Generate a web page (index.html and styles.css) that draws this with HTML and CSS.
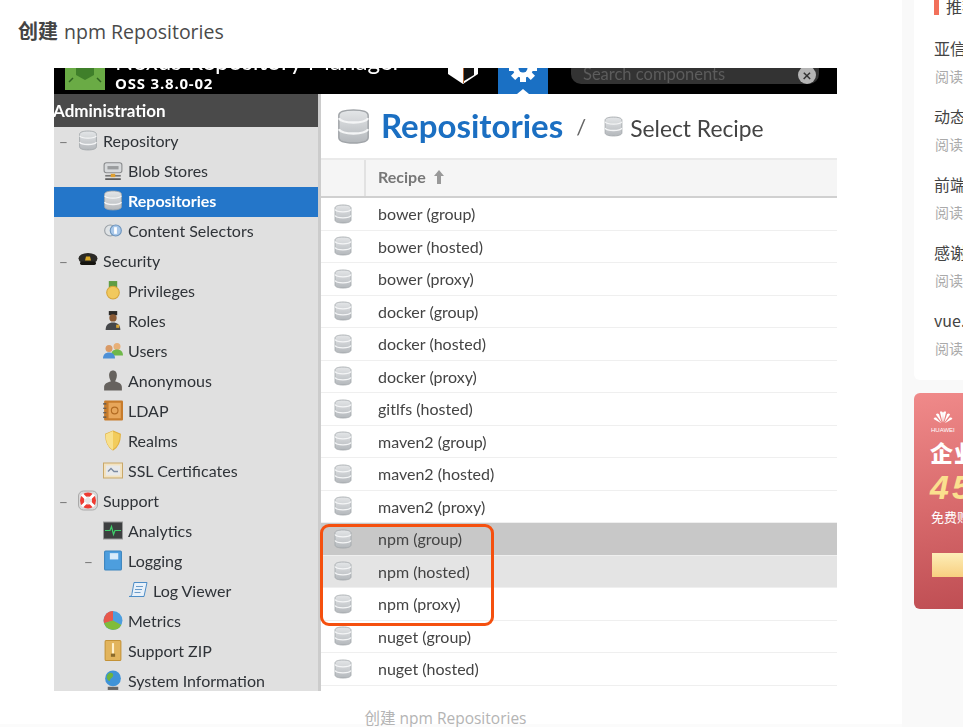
FILE: index.html
```html
<!DOCTYPE html>
<html>
<head>
    <meta charset="utf-8">
    <link rel="stylesheet" href="styles.css">
    <title>创建 npm Repositories</title>
</head>
<body>
    <svg class="defs" width="0" height="0">
        <defs>
            <linearGradient id="dbFill" x1="0" y1="0" x2="0" y2="1">
                <stop offset="0" stop-color="#e4e6e8"/>
                <stop offset="1" stop-color="#b4b8bc"/>
            </linearGradient>
            <symbol id="db" viewBox="0 0 18 20">
                <path d="M1 4c0-2 3.500-3 8-3s8 1 8 3v12c0 2-3.500 3-8 3s-8-1-8-3z" fill="url(#dbFill)" stroke="#a0a4a8" stroke-width=".8"/>
                <path d="M1 5.500c1 1.700 4 2.300 8 2.300s7-.6 8-2.300M1 11.500c1 1.700 4 2.300 8 2.300s7-.6 8-2.300" fill="none" stroke="#f4f5f6" stroke-width="1.300"/>
            </symbol>
        </defs>
    </svg>

    <div class="page">
        <main class="article">
            <h3 class="article-title"><b>创建</b> npm Repositories</h3>

            <figure class="shot">
                <div class="topbar">
                    <svg class="nx-logo" viewBox="0 0 40 32"><rect width="40" height="32" fill="#6aab45"/><path d="M20 4l9 5v8l-9 5-9-5V9z" fill="#3f7f2a"/><path d="M8 20l-4 4M32 20l4 4" stroke="#2f6420" stroke-width="1.500"/></svg>
                    <div class="brand">
                        <div class="brand-name">Nexus Repository Manager</div>
                        <div class="brand-ver">OSS 3.8.0-02</div>
                    </div>
                    <svg class="nx-shield" viewBox="0 0 32 32"><path d="M1 1h30v18l-15 10L1 19z" fill="#fff"/><path d="M17 1h10v19l-10 6z" fill="#111"/><path d="M16 1h1v27h-1z" fill="#b9652c"/></svg>
                    <div class="gear-tab">
                        <svg viewBox="0 0 50 26"><g transform="translate(25 0)"><circle r="10" fill="#fff"/><path d="M-3-14h6v6h-6zM-3 8h6v6h-6zM-14-3h6v6h-6zM8-3h6v6H8z" fill="#fff"/><path d="M-3-14h6v6h-6zM-3 8h6v6h-6zM-14-3h6v6h-6zM8-3h6v6H8z" fill="#fff" transform="rotate(45)"/><circle r="4.500" fill="#1a70c4"/></g><path d="M19 26h12l-6-5z" fill="#fff"/></svg>
                    </div>
                    <div class="search">
                        <span>Search components</span>
                        <i class="search-x">×</i>
                    </div>
                </div>

                <div class="shot-body">
                    <nav class="side">
                        <div class="side-head">Administration</div>

                        <div class="node l0"><span class="sign">–</span><svg class="ico"><use href="#db"/></svg>Repository</div>
                        <div class="node l1"><span class="sign"></span><svg class="ico" viewBox="0 0 18 18"><rect x="1" y="2" width="16" height="9" rx="2" fill="#d8dadc" stroke="#8a8c8e"/><rect x="4" y="5" width="10" height="3" fill="#9a9c9e"/><rect x="2" y="13" width="14" height="1.500" fill="#777"/><rect x="7" y="12" width="4" height="3" fill="#e0a030"/><rect x="2" y="16" width="14" height="1.500" fill="#555"/></svg>Blob Stores</div>
                        <div class="node l1 active"><span class="sign"></span><svg class="ico"><use href="#db"/></svg>Repositories</div>
                        <div class="node l1"><span class="sign"></span><svg class="ico" viewBox="0 0 18 18"><circle cx="6.500" cy="9" r="5" fill="#dfe3e6" stroke="#9aa0a6"/><circle cx="11.500" cy="9" r="5" fill="#a9c8ea" stroke="#6d94bd"/><rect x="10" y="6" width="2.500" height="6" fill="#fff"/></svg>Content Selectors</div>

                        <div class="node l0"><span class="sign">–</span><svg class="ico" viewBox="0 0 20 18"><ellipse cx="10" cy="7" rx="9.500" ry="5.500" fill="#2b2a26"/><rect x="2" y="10" width="16" height="3.500" rx="1.700" fill="#15140f"/><path d="M7 9h6l-1-4H8z" fill="#d9a927"/></svg>Security</div>
                        <div class="node l1"><span class="sign"></span><svg class="ico" viewBox="0 0 18 20"><rect x="5" y="1" width="8" height="6" fill="#5f9d43"/><circle cx="9" cy="12" r="6" fill="#f1c95d" stroke="#d6a438"/></svg>Privileges</div>
                        <div class="node l1"><span class="sign"></span><svg class="ico" viewBox="0 0 18 20"><rect x="5" y="1" width="8" height="4" fill="#2c2a28"/><circle cx="9" cy="7.500" r="3.500" fill="#8a5a34"/><path d="M2 19c0-5 3-7 7-7s7 2 7 7z" fill="#45474a"/><rect x="12" y="14" width="3" height="3" fill="#d6a438"/></svg>Roles</div>
                        <div class="node l1"><span class="sign"></span><svg class="ico" viewBox="0 0 20 18"><circle cx="14" cy="5" r="3.500" fill="#e8b078"/><path d="M8 14c0-4 2.500-6 6-6s6 2 6 6z" fill="#6fb84a"/><circle cx="6" cy="7" r="3.500" fill="#d99a66"/><path d="M0 17c0-4 2.500-6 6-6s6 2 6 6z" fill="#4d90d6"/></svg>Users</div>
                        <div class="node l1"><span class="sign"></span><svg class="ico" viewBox="0 0 18 18"><path d="M9 0c2.500 0 3.500 2 3.500 4.500S11 9 11 10c3 .7 6 2 6 5v3H1v-3c0-3 3-4.300 6-5 0-1-1.500-3-1.500-5.500S6.500 0 9 0z" fill="#66625e"/></svg>Anonymous</div>
                        <div class="node l1"><span class="sign"></span><svg class="ico" viewBox="0 0 18 18"><rect x="1" y="0" width="17" height="18" rx="1" fill="#c77c2c"/><rect x="5" y="2" width="11" height="14" fill="#e7a65a"/><circle cx="10.500" cy="9" r="3" fill="none" stroke="#b26b22"/><path d="M0 3h3M0 7h3M0 11h3M0 15h3" stroke="#555"/></svg>LDAP</div>
                        <div class="node l1"><span class="sign"></span><svg class="ico" viewBox="0 0 18 20"><path d="M9 1l7 3c0 7-2 12-7 15-5-3-7-8-7-15z" fill="#f2cc5c" stroke="#e0b040"/><path d="M9 1v18c-5-3-7-8-7-15z" fill="#f8e08c"/></svg>Realms</div>
                        <div class="node l1"><span class="sign"></span><svg class="ico" viewBox="0 0 20 16"><rect x=".5" y=".5" width="19" height="15" fill="#f2e2c0" stroke="#c9a869"/><rect x="3" y="3" width="14" height="10" fill="#e8e9ea"/><path d="M5 9l3-3 3 3h4" fill="none" stroke="#7b8aa0" stroke-width="1.300"/></svg>SSL Certificates</div>

                        <div class="node l0"><span class="sign">–</span><svg class="ico" viewBox="0 0 20 20"><rect x=".5" y=".5" width="19" height="19" rx="5" fill="#d9d9d9" stroke="#aaa"/><circle cx="10" cy="10" r="8" fill="#ee3b32"/><circle cx="10" cy="10" r="4" fill="#e6e6e6"/><path d="M4 4l4 4M16 4l-4 4M4 16l4-4M16 16l-4-4" stroke="#fff" stroke-width="3"/></svg>Support</div>
                        <div class="node l1"><span class="sign"></span><svg class="ico" viewBox="0 0 20 18"><rect x=".5" y=".5" width="19" height="17" fill="#3d3f40" stroke="#999"/><path d="M2 9h5l1.500-4 2 8 1.500-4h6" fill="none" stroke="#3fd06a" stroke-width="1.200"/></svg>Analytics</div>
                        <div class="node l1"><span class="sign">–</span><svg class="ico" viewBox="0 0 18 20"><rect x="1" y="1" width="16" height="18" rx="1" fill="#4d9ede" stroke="#3a83bd"/><rect x="6" y="3" width="8" height="6" fill="#d9ecfa"/></svg>Logging</div>
                        <div class="node l2"><span class="sign"></span><svg class="ico" viewBox="0 0 20 18"><path d="M6 1h13l-3 14H1c2 0 3-1 3-3z" fill="#e8f1fa" stroke="#4d8dc7"/><path d="M8 5h7M7 8h7M6.500 11h6" stroke="#6a9bc9"/></svg>Log Viewer</div>
                        <div class="node l1"><span class="sign"></span><svg class="ico" viewBox="0 0 18 18"><circle cx="9" cy="9" r="8.500" fill="#4d9ede"/><path d="M9 9V.5A8.500 8.500 0 0 0 1 11.500z" fill="#e8584a"/><path d="M9 9l-8 2.500a8.500 8.500 0 0 0 15.500 1.500z" fill="#80bc3a"/></svg>Metrics</div>
                        <div class="node l1"><span class="sign"></span><svg class="ico" viewBox="0 0 16 20"><rect x=".5" y=".5" width="15" height="19" rx="1" fill="#e2b45c" stroke="#c49236"/><rect x="7" y="3" width="2" height="10" fill="#fff1cc"/><rect x="6" y="13" width="4" height="3" fill="#8a6a2a"/></svg>Support ZIP</div>
                        <div class="node l1"><span class="sign"></span><svg class="ico" viewBox="0 0 18 20"><circle cx="9" cy="8" r="7.500" fill="#3f93d8"/><path d="M5 3c3-1 5 1 4 3S6 8 6 10 3 9 3 7s1-3 2-4z" fill="#6db33f"/><rect x="4" y="16" width="10" height="3" fill="#666"/></svg>System Information</div>
                    </nav>

                    <section class="content">
                        <header class="crumbs">
                            <svg class="crumb-db"><use href="#db"/></svg>
                            <span class="crumb-title">Repositories</span>
                            <span class="crumb-sep">/</span>
                            <svg class="crumb-db-small"><use href="#db"/></svg>
                            <span class="crumb-sub">Select Recipe</span>
                        </header>

                        <div class="grid-head">
                            <div class="grid-head-ico"></div>
                            <div class="grid-head-cell">Recipe<svg class="sort" viewBox="0 0 10 14"><path d="M5 0l5 6H7v8H3V6H0z" fill="#999"/></svg></div>
                        </div>

                        <div class="row"><svg class="row-db"><use href="#db"/></svg>bower (group)</div>
                        <div class="row"><svg class="row-db"><use href="#db"/></svg>bower (hosted)</div>
                        <div class="row"><svg class="row-db"><use href="#db"/></svg>bower (proxy)</div>
                        <div class="row"><svg class="row-db"><use href="#db"/></svg>docker (group)</div>
                        <div class="row"><svg class="row-db"><use href="#db"/></svg>docker (hosted)</div>
                        <div class="row"><svg class="row-db"><use href="#db"/></svg>docker (proxy)</div>
                        <div class="row"><svg class="row-db"><use href="#db"/></svg>gitlfs (hosted)</div>
                        <div class="row"><svg class="row-db"><use href="#db"/></svg>maven2 (group)</div>
                        <div class="row"><svg class="row-db"><use href="#db"/></svg>maven2 (hosted)</div>
                        <div class="row"><svg class="row-db"><use href="#db"/></svg>maven2 (proxy)</div>
                        <div class="row selected"><svg class="row-db"><use href="#db"/></svg>npm (group)</div>
                        <div class="row hovered"><svg class="row-db"><use href="#db"/></svg>npm (hosted)</div>
                        <div class="row"><svg class="row-db"><use href="#db"/></svg>npm (proxy)</div>
                        <div class="row"><svg class="row-db"><use href="#db"/></svg>nuget (group)</div>
                        <div class="row"><svg class="row-db"><use href="#db"/></svg>nuget (hosted)</div>
                    </section>
                </div>

                <div class="mark"></div>
            </figure>

            <figcaption class="caption">创建 npm Repositories</figcaption>
        </main>

        <aside class="aside">
            <div class="card">
                <div class="card-title">推荐阅读</div>
                <div class="post"><div class="post-name">亚信安慧数据库实践</div><div class="post-meta">阅读 1.2k</div></div>
                <div class="post"><div class="post-name">动态规划入门指南</div><div class="post-meta">阅读 3.4k</div></div>
                <div class="post"><div class="post-name">前端工程化实践</div><div class="post-meta">阅读 2.1k</div></div>
                <div class="post"><div class="post-name">感谢每一位贡献者</div><div class="post-meta">阅读 986</div></div>
                <div class="post"><div class="post-name">vue.js 组件开发</div><div class="post-meta">阅读 1.7k</div></div>
            </div>

            <div class="promo">
                <svg class="hw-logo" viewBox="0 0 24 18">
                    <g fill="#fff">
                        <path d="M11.500 14L8.500 2c1.500-.6 3-.3 3.500 1.500z"/>
                        <path d="M12.500 14l3-12c-1.500-.6-3-.3-3.500 1.500z"/>
                        <path d="M10.500 14L4 5c1-1.200 2.500-1.300 3.500-.2z"/>
                        <path d="M13.500 14L20 5c-1-1.200-2.500-1.300-3.500-.2z"/>
                        <path d="M10 15L1.500 10c.3-1.500 1.500-2 2.800-1.500z"/>
                        <path d="M14 15l8.500-5c-.3-1.500-1.500-2-2.800-1.500z"/>
                    </g>
                </svg>
                <div class="hw-name">HUAWEI</div>
                <div class="promo-title">企业上云</div>
                <div class="promo-num">45</div>
                <div class="promo-text">免费赠送</div>
                <div class="promo-btn"></div>
            </div>
        </aside>
    </div>
</body>
</html>
```

FILE: styles.css
```css
* {
    box-sizing: border-box;
}

html, body {
    margin: 0;
    padding: 0;
    height: 727px;
    overflow: hidden;
    background-color: #f9f9f9;
}

.defs {
    position: absolute;
}

.page {
    display: flex;
    width: 963px;
    height: 727px;
    overflow: hidden;
    font-family: "Open Sans", "Noto Sans CJK SC", sans-serif;
}

/* article column */
.article {
    width: 902px;
    flex: none;
    background-color: #fff;
    padding-top: 17px;
    border-bottom: 3px solid #fbfbfb;
}

.article-title {
    margin: 0 0 24px 18px;
    height: 27px;
    font-size: 19.5px;
    line-height: 27px;
    font-weight: 500;
    color: #4a4a4a;
}

.article-title b {
    margin-right: 1px;
    font-family: "Noto Sans CJK SC", sans-serif;
    font-weight: 700;
    font-size: 20px;
    color: #444;
}

.shot {
    position: relative;
    width: 783px;
    height: 623px;
    margin: 0 0 0 54px;
    overflow: hidden;
    background-color: #fff;
    font-family: Lato, "Open Sans", sans-serif;
    filter: blur(0.4px);
}

.caption {
    width: 783px;
    margin: 17px 0 0 54px;
    text-align: center;
    font-size: 15.5px;
    line-height: 20px;
    color: #b4b4b4;
}

/* screenshot top bar */
.topbar {
    display: flex;
    align-items: flex-end;
    height: 26px;
    overflow: hidden;
    background-color: #000;
    color: #fff;
}

.nx-logo {
    width: 40px;
    height: 32px;
    flex: none;
    margin: 0 10px 4px 11px;
}

.brand {
    width: 332px;
    flex: none;
    padding-bottom: 2px;
}

.brand-name {
    font-size: 24.2px;
    line-height: 24px;
    margin-bottom: 2px;
    white-space: nowrap;
}

.brand-ver {
    font-size: 15px;
    line-height: 17px;
    font-weight: 700;
    letter-spacing: .8px;
    font-family: "Open Sans", sans-serif;
}

.nx-shield {
    width: 32px;
    height: 32px;
    flex: none;
    margin-bottom: 7px;
}

.gear-tab {
    width: 50px;
    height: 26px;
    flex: none;
    margin-left: 19px;
    background-color: #1a70c4;
    overflow: hidden;
}

.gear-tab svg {
    display: block;
    width: 50px;
    height: 26px;
}

.search {
    display: flex;
    align-items: flex-end;
    justify-content: space-between;
    width: 248px;
    height: 24px;
    flex: none;
    margin: 0 0 10px 23px;
    padding: 0 3px 0 12px;
    border-radius: 10px;
    background-color: #333;
    color: #5c5c5c;
    font-size: 16.5px;
    line-height: 20px;
}

.search-x {
    width: 18px;
    height: 18px;
    border-radius: 50%;
    background-color: #b5b5b5;
    color: #333;
    font-style: normal;
    font-weight: 700;
    font-size: 16px;
    line-height: 17px;
    text-align: center;
}

/* screenshot body */
.shot-body {
    display: flex;
    height: 597px;
}

.side {
    width: 267px;
    flex: none;
    overflow: hidden;
    background-color: #e0e0e0;
    border-right: 3px solid #cccccc;
}

.side-head {
    height: 33px;
    background-color: #4a4a4a;
    color: #fff;
    font-weight: 700;
    font-size: 17px;
    line-height: 33px;
    white-space: nowrap;
    text-indent: -1px;
}

.node {
    display: flex;
    align-items: center;
    height: 30px;
    padding-bottom: 4px;
    font-size: 16px;
    color: #2f3338;
    white-space: nowrap;
}

.node.l1 {
    padding-left: 25px;
}

.node.l2 {
    padding-left: 50px;
}

.node.active {
    background-color: #2476c9;
    color: #fff;
    font-weight: 700;
}

.sign {
    width: 24px;
    flex: none;
    text-align: center;
    color: #777;
    padding-right: 5px;
}

.ico {
    width: 20px;
    height: 21px;
    flex: none;
    margin-right: 5px;
}

.content {
    flex: 1;
    overflow: hidden;
}

.crumbs {
    display: flex;
    align-items: center;
    height: 66px;
    padding-left: 16px;
    border-bottom: 2px solid #eaeaea;
}

.crumb-db {
    width: 33px;
    height: 37px;
    margin-right: 11px;
}

.crumb-title {
    font-size: 33px;
    font-weight: 700;
    color: #1b6fc2;
    margin-top: -3px;
}

.crumb-sep {
    margin: 0 18px 0 13px;
    font-size: 22px;
    color: #666;
}

.crumb-db-small {
    width: 19px;
    height: 21px;
    margin-right: 7px;
}

.crumb-sub {
    margin-top: 4px;
    font-size: 22.8px;
    color: #444;
}

.grid-head {
    display: flex;
    height: 38px;
    background-color: #f5f5f5;
    border-bottom: 2px solid #d0d0d0;
}

.grid-head-ico {
    width: 45px;
    border-right: 2px solid #e2e2e2;
}

.grid-head-cell {
    display: flex;
    align-items: center;
    padding: 0 0 3px 12px;
    font-size: 16px;
    font-weight: 700;
    color: #777;
}

.sort {
    width: 10px;
    height: 14px;
    margin-left: 8px;
}

.row {
    display: flex;
    align-items: center;
    height: 32.5px;
    padding-left: 13px;
    border-bottom: 1px solid #efefef;
    font-size: 16px;
    color: #444;
    white-space: nowrap;
}

.row.selected {
    background-color: #c8c8c8;
}

.row.hovered {
    background-color: #e4e4e4;
}

.row-db {
    width: 18px;
    height: 20px;
    flex: none;
    margin-right: 26px;
}

.mark {
    position: absolute;
    left: 266px;
    top: 456px;
    width: 174px;
    height: 102px;
    border: 3px solid #f5500f;
    border-radius: 9px;
}

/* right column, cut off by the window */
.aside {
    width: 49px;
    flex: none;
    margin-left: 12px;
    overflow: hidden;
}

.card {
    width: 280px;
    height: 390px;
    margin-top: -10px;
    padding: 10px 20px;
    border-radius: 6px;
    background-color: #fff;
}

.card-title {
    height: 15px;
    padding-left: 7px;
    border-left: 5px solid #f2705a;
    font-family: "Noto Sans CJK SC", sans-serif;
    font-size: 16px;
    line-height: 13px;
    color: #444;
    overflow: hidden;
}

.post {
    height: 68px;
}

.post-name {
    padding-top: 13px;
    font-size: 16px;
    line-height: 24px;
    color: #444;
    white-space: nowrap;
    font-family: "Noto Sans CJK SC", sans-serif;
}

.post-meta {
    margin-top: 6px;
    padding-left: 1px;
    font-size: 14px;
    line-height: 20px;
    color: #aaa;
    white-space: nowrap;
    font-family: "Noto Sans CJK SC", sans-serif;
}

.card-title + .post {
    margin-top: 8px;
}

.promo {
    width: 280px;
    height: 216px;
    margin-top: 13px;
    padding: 17px 0 0 18px;
    border-radius: 6px;
    background: linear-gradient(170deg, #f08a8a 0%, #d86a6c 45%, #b5434a 100%);
    color: #fff;
    font-family: "Noto Sans CJK SC", sans-serif;
    white-space: nowrap;
}

.hw-logo {
    display: block;
    width: 22px;
    height: 16px;
}

.hw-name {
    font-family: "Liberation Sans", sans-serif;
    font-size: 6px;
    line-height: 8px;
    margin-left: -1px;
}

.promo-title {
    margin: 3px 0 0 -2px;
    font-size: 23px;
    line-height: 30px;
    font-weight: 900;
    letter-spacing: 1px;
}

.promo-num {
    margin: 5px 0 0 -2px;
    font-family: "Liberation Sans", sans-serif;
    font-size: 34px;
    line-height: 30px;
    font-weight: 700;
    font-style: italic;
    letter-spacing: 3px;
    color: #fbe08e;
}

.promo-text {
    margin: 5px 0 0 -1px;
    font-size: 13px;
    line-height: 20px;
}

.promo-btn {
    width: 120px;
    height: 24px;
    margin-top: 26px;
    background: linear-gradient(180deg, #fdeeb8, #f8cf80);
}
```
